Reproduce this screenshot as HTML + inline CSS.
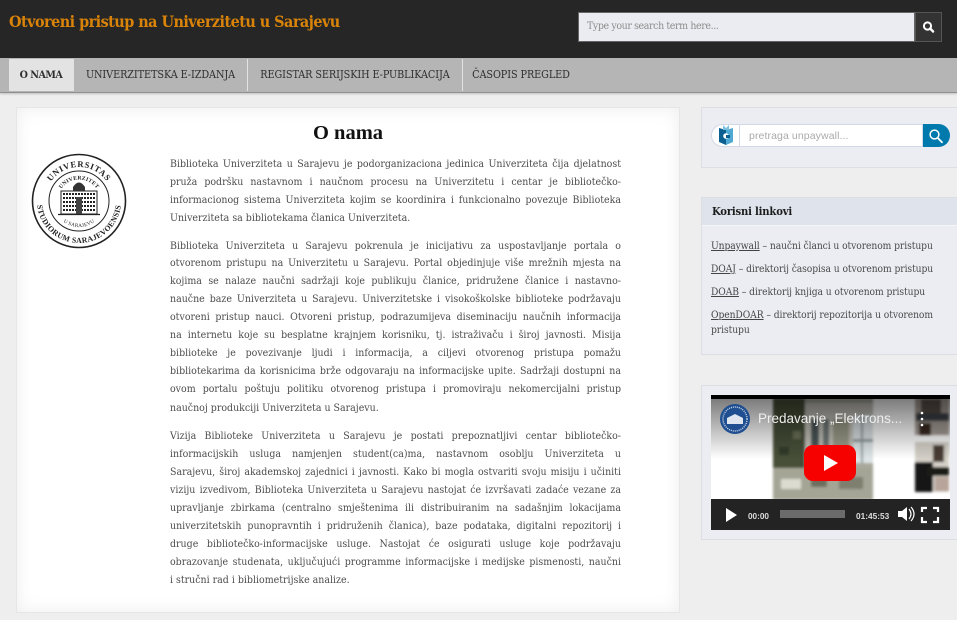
<!DOCTYPE html>
<html lang="bs"><head><meta charset="utf-8"><title>O nama</title>
<style>
html,body{margin:0;padding:0}
body{width:957px;height:620px;position:relative;overflow:hidden;background:#eeeeee;font-family:"DejaVu Serif",serif;font-stretch:condensed}
#w{position:absolute;left:0;top:0;width:957px;height:620px;filter:blur(.3px)}
.a{position:absolute}
#hd{left:0;top:0;width:957px;height:58px;background:#262626}
#ttl{left:9px;top:10px;font-weight:bold;font-size:16px;line-height:24px;letter-spacing:-.53px;color:#d98308;white-space:nowrap}
#s{left:578px;top:12px;width:335px;height:28px;background:#ebecf1;border:1px solid #666}
#s span{position:absolute;left:8px;top:6px;font-size:10.5px;line-height:14px;letter-spacing:-.38px;color:#8d8d8d}
#sb{left:915px;top:12px;width:25px;height:28px;background:#333;border:1px solid #555}
#nav{left:0;top:58px;width:957px;height:34px;background:#b5b5b5;border-bottom:1px solid #909090;box-shadow:0 1px 2px rgba(0,0,0,.2)}
.t{position:absolute;top:1px;height:32px;font-size:10.8px;line-height:32px;letter-spacing:-.1px;color:#2e2e2e;box-sizing:border-box;text-align:center;white-space:nowrap;border-right:1px solid #e2e2e2}
#main{left:16px;top:107px;width:664px;height:506px;background:#fff;border:1px solid #e6e6e6;box-sizing:border-box;box-shadow:inset 0 0 18px rgba(0,0,0,.07)}
h1{position:absolute;left:16px;width:664px;top:120px;margin:0;text-align:center;font:bold 20.5px/26px "Liberation Serif",serif;color:#111}
.l{position:absolute;left:170px;width:451px;height:14px;font-size:10.5px;line-height:14px;color:#4c4c4c;text-align:justify;text-align-last:justify;white-space:nowrap}
.e{text-align-last:left}
.p{position:absolute;left:701px;width:256px;background:#ebedf2;border:1px solid #dcdee2;border-right:0;box-sizing:border-box}
.k{position:absolute;left:711px;font-size:10.2px;line-height:14px;letter-spacing:-.07px;color:#4a4a4a;white-space:nowrap}
.k u{color:#444}
</style></head><body><div id="w">
<div class="a" id="hd"></div>
<div class="a" id="ttl">Otvoreni pristup na Univerzitetu u Sarajevu</div>
<div class="a" id="s"><span>Type your search term here...</span></div>
<div class="a" id="sb"><svg width="25" height="28" viewBox="0 0 25 28"><circle cx="11.5" cy="13" r="3.6" fill="none" stroke="#fff" stroke-width="2"/><path d="M14.1 15.5l3 3" stroke="#fff" stroke-width="2.4" stroke-linecap="round"/></svg></div>
<div class="a" id="nav">
<div class="t" style="left:9px;width:65px;background:#e3e3e3;font-weight:bold;font-size:10.6px;letter-spacing:-.5px">O NAMA</div>
<div class="t" style="left:74px;width:174px">UNIVERZITETSKA E-IZDANJA</div>
<div class="t" style="left:248px;width:215px">REGISTAR SERIJSKIH E-PUBLIKACIJA</div>
<div class="t" style="left:463px;width:116px;border:0">ČASOPIS PREGLED</div>
</div>
<div class="a" id="main"></div>
<h1>O nama</h1>
<svg class="a" style="left:30px;top:153px" width="98" height="98" viewBox="0 0 98 98">
<defs><path id="c1" d="M15 48a34 34 0 0 1 68 0"/><path id="c2" d="M7 48a42 42 0 0 0 84 0"/><path id="c3" d="M27.5 48a21.5 21.5 0 0 1 43 0"/><path id="c4" d="M23 48a26 26 0 0 0 52 0"/></defs>
<circle cx="49" cy="48" r="46.5" fill="none" stroke="#222" stroke-width="1.6"/>
<circle cx="49" cy="48" r="30" fill="none" stroke="#222" stroke-width="1"/>
<text font-family="Liberation Serif" font-size="8.6" font-weight="bold" fill="#222" letter-spacing=".7"><textPath href="#c1" startOffset="50%" text-anchor="middle">UNIVERSITAS</textPath></text>
<text font-family="Liberation Serif" font-size="7.8" font-weight="bold" fill="#222" letter-spacing=".35"><textPath href="#c2" startOffset="50%" text-anchor="middle">STUDIORUM SARAJEVOENSIS</textPath></text>
<text font-family="Liberation Serif" font-size="5.6" font-weight="bold" fill="#222" letter-spacing=".2"><textPath href="#c3" startOffset="50%" text-anchor="middle">UNIVERZITET</textPath></text>
<text font-family="Liberation Serif" font-size="5.2" fill="#222" letter-spacing=".2"><textPath href="#c4" startOffset="50%" text-anchor="middle">U SARAJEVU</textPath></text>
<path d="M31 38h36v23H31z" fill="#fff" stroke="#222"/>
<path d="M43 38v-4q6-9 12 0v4z" fill="#333"/>
<path d="M33 41h32M33 45h32M33 49h32M33 53h32M33 57h32" stroke="#222" stroke-width="2" stroke-dasharray="2 1"/>
<path d="M46 44h6v17h-6z" fill="#444"/>
<path d="M28 61.5h42" stroke="#222" stroke-width="1.2"/>
</svg>

<div class="l" style="top:157px">Biblioteka Univerziteta u Sarajevu je podorganizaciona jedinica Univerziteta čija djelatnost</div>
<div class="l" style="top:175px">pruža podršku nastavnom i naučnom procesu na Univerzitetu i centar je bibliotečko-</div>
<div class="l" style="top:193px">informacionog sistema Univerziteta kojim se koordinira i funkcionalno povezuje Biblioteka</div>
<div class="l e" style="top:211px">Univerziteta sa bibliotekama članica Univerziteta.</div>

<div class="l" style="top:239px">Biblioteka Univerziteta u Sarajevu pokrenula je inicijativu za uspostavljanje portala o</div>
<div class="l" style="top:256px">otvorenom pristupu na Univerzitetu u Sarajevu. Portal objedinjuje više mrežnih mjesta na</div>
<div class="l" style="top:274px">kojima se nalaze naučni sadržaji koje publikuju članice, pridružene članice i nastavno-</div>
<div class="l" style="top:292px">naučne baze Univerziteta u Sarajevu. Univerzitetske i visokoškolske biblioteke podržavaju</div>
<div class="l" style="top:310px">otvoreni pristup nauci. Otvoreni pristup, podrazumijeva diseminaciju naučnih informacija</div>
<div class="l" style="top:328px">na internetu koje su besplatne krajnjem korisniku, tj. istraživaču i široj javnosti. Misija</div>
<div class="l" style="top:346px">biblioteke je povezivanje ljudi i informacija, a ciljevi otvorenog pristupa pomažu</div>
<div class="l" style="top:364px">bibliotekarima da korisnicima brže odgovaraju na informacijske upite. Sadržaji dostupni na</div>
<div class="l" style="top:382px">ovom portalu poštuju politiku otvorenog pristupa i promoviraju nekomercijalni pristup</div>
<div class="l e" style="top:401px">naučnoj produkciji Univerziteta u Sarajevu.</div>

<div class="l" style="top:429px">Vizija Biblioteke Univerziteta u Sarajevu je postati prepoznatljivi centar bibliotečko-</div>
<div class="l" style="top:447px">informacijskih usluga namjenjen student(ca)ma, nastavnom osoblju Univerziteta u</div>
<div class="l" style="top:465px">Sarajevu, široj akademskoj zajednici i javnosti. Kako bi mogla ostvariti svoju misiju i učiniti</div>
<div class="l" style="top:483px">viziju izvedivom, Biblioteka Univerziteta u Sarajevu nastojat će izvršavati zadaće vezane za</div>
<div class="l" style="top:501px">upravljanje zbirkama (centralno smještenima ili distribuiranim na sadašnjim lokacijama</div>
<div class="l" style="top:519px">univerzitetskih punopravntih i pridruženih članica), baze podataka, digitalni repozitorij i</div>
<div class="l" style="top:537px">druge bibliotečko-informacijske usluge. Nastojat će osigurati usluge koje podržavaju</div>
<div class="l" style="top:555px">obrazovanje studenata, uključujući programme informacijske i medijske pismenosti, naučni</div>
<div class="l e" style="top:573px">i stručni rad i bibliometrijske analize.</div>

<div class="p" style="top:107px;height:61px"></div>
<div class="a" style="left:711px;top:124px;width:212px;height:23px;background:#fff;border:1px solid #d2d8e6;border-radius:12px 0 0 12px;box-sizing:border-box"></div>
<div class="a" style="left:739px;top:125px;width:1px;height:21px;background:#d2d8e6"></div>
<div class="a" style="left:923px;top:124px;width:27px;height:23px;background:#0079ad;border-radius:0 12px 12px 0"></div>
<svg class="a" style="left:923px;top:124px" width="27" height="23" viewBox="0 0 27 23"><circle cx="11.5" cy="10.5" r="4.4" fill="none" stroke="#fff" stroke-width="1.5"/><path d="M14.8 14l4.2 4.2" stroke="#fff" stroke-width="1.8" stroke-linecap="round"/></svg>
<svg class="a" style="left:718px;top:125px" width="16" height="20" viewBox="0 0 16 20"><path d="M1 3l7 2v15l-7-3z" fill="#0b5f91"/><path d="M8 5l7-2v14l-7 3z" fill="#4fa9d3"/><path d="M5 0l3 3 3-3v5H5z" fill="#7cc0e0"/><circle cx="8" cy="11" r="2.8" fill="#fff"/><path d="M8 10h4v3H8z" fill="#0b5f91"/></svg>
<div class="a" style="left:749px;top:129px;font:10.5px/14px 'Liberation Sans',sans-serif;letter-spacing:.1px;color:#aaa">pretraga unpaywall...</div>

<div class="p" style="top:197px;height:158px"></div>
<div class="a" style="left:702px;top:198px;width:255px;height:27px;background:#dfe3ec;border-bottom:1px solid #f4f5f8"></div>
<div class="a" style="left:712px;top:204px;font-weight:bold;font-size:11.2px;line-height:15px;letter-spacing:-.2px;color:#1c1c1c">Korisni linkovi</div>
<div class="k" style="top:240px"><u>Unpaywall</u> – naučni članci u otvorenom pristupu</div>
<div class="k" style="top:263px"><u>DOAJ</u> – direktorij časopisa u otvorenom pristupu</div>
<div class="k" style="top:286px"><u>DOAB</u> – direktorij knjiga u otvorenom pristupu</div>
<div class="k" style="top:309px"><u>OpenDOAR</u> – direktorij repozitorija u otvorenom</div>
<div class="k" style="top:324px">pristupu</div>

<div class="p" style="top:385px;height:155px"></div>
<svg class="a" style="left:711px;top:395px" width="239" height="135" viewBox="0 0 239 135">
<defs>
<linearGradient id="g" x1="0" y1="0" x2="0" y2="1"><stop offset="0" stop-color="#000" stop-opacity=".55"/><stop offset="1" stop-color="#000" stop-opacity="0"/></linearGradient>
<filter id="b" x="-5%" y="-5%" width="110%" height="110%"><feGaussianBlur stdDeviation="1.2"/></filter>
</defs>
<rect width="239" height="135" fill="#fff"/>
<g filter="url(#b)">
<rect x="62" y="3" width="100" height="102" fill="#a8a89c"/>
<rect x="62" y="3" width="32" height="70" fill="#465038"/>
<rect x="70" y="20" width="8" height="6" fill="#2d3525"/><rect x="82" y="36" width="8" height="8" fill="#6a7258"/><rect x="68" y="52" width="10" height="8" fill="#333b2a"/>
<rect x="94" y="8" width="68" height="60" fill="#c4c2ba"/>
<rect x="100" y="24" width="8" height="28" fill="#4c5658"/><rect x="112" y="24" width="6" height="28" fill="#6e7878"/>
<rect x="122" y="24" width="16" height="44" fill="#9c9c8a"/>
<rect x="142" y="20" width="20" height="48" fill="#dde4e6"/><rect x="150" y="20" width="2" height="48" fill="#8f9a9c"/><rect x="142" y="44" width="20" height="3" fill="#8f9a9c"/>
<rect x="62" y="73" width="100" height="32" fill="#a5a596"/>
<rect x="70" y="84" width="20" height="10" fill="#dcdcd0"/><rect x="100" y="78" width="16" height="14" fill="#6e6e5e"/><rect x="128" y="82" width="24" height="12" fill="#7f7f70"/>
<rect x="204" y="3" width="34" height="37" fill="#a89f98"/>
<rect x="210" y="4" width="20" height="14" fill="#5a5048"/><rect x="205" y="18" width="33" height="8" fill="#3c4248"/>
<rect x="208" y="28" width="12" height="12" fill="#3a2a24"/>
<rect x="204" y="47" width="34" height="50" fill="#d4d0c8"/>
<rect x="222" y="50" width="11" height="17" fill="#4a3c36"/>
<rect x="204" y="67" width="18" height="30" fill="#141412"/>
<rect x="216" y="72" width="22" height="9" fill="#1e1a18"/>
<rect x="224" y="82" width="14" height="14" fill="#b8a49a"/>
</g>
<rect y="0" width="239" height="64" fill="url(#g)"/>
<rect width="239" height="4" fill="#000"/>
<circle cx="24" cy="24" r="15" fill="#1f4f91"/><circle cx="24" cy="24" r="12" fill="none" stroke="#cfd9e8" stroke-dasharray="1 1" stroke-width="1.4"/><path d="M16 29v-6l8-4 8 4v6z" fill="#dfe6f0"/>
<text x="47" y="28" font-family="Liberation Sans" font-size="13.5" fill="#eee">Predavanje „Elektrons...</text>
<circle cx="211" cy="18" r="1.3" fill="#fff"/><circle cx="211" cy="24" r="1.3" fill="#fff"/><circle cx="211" cy="30" r="1.3" fill="#fff"/>
<rect x="93" y="50" width="52" height="36" rx="9" fill="#f70000"/>
<path d="M113 60l14 8-14 8z" fill="#fff"/>
<rect y="104" width="239" height="31" fill="#232323"/>
<path d="M15 113l11 7-11 7z" fill="#fff"/>
<text x="37" y="124" font-family="Liberation Sans" font-size="8.2" font-weight="bold" fill="#ddd">00:00</text>
<rect x="69" y="115" width="65" height="8" fill="#6b6b6b"/>
<text x="145" y="124" font-family="Liberation Sans" font-size="8.3" font-weight="bold" fill="#ddd">01:45:53</text>
<path d="M187 116h4l5-4v14l-5-4h-4z" fill="#fff"/><path d="M198 114q4 5 0 10M200 112q6 7 0 14" fill="none" stroke="#fff" stroke-width="1.2"/>
<path d="M211 117v-4h5M222 113h5v4M227 122v5h-5M216 127h-5v-5" fill="none" stroke="#fff" stroke-width="2.2"/>
</svg>
</div></body></html>
